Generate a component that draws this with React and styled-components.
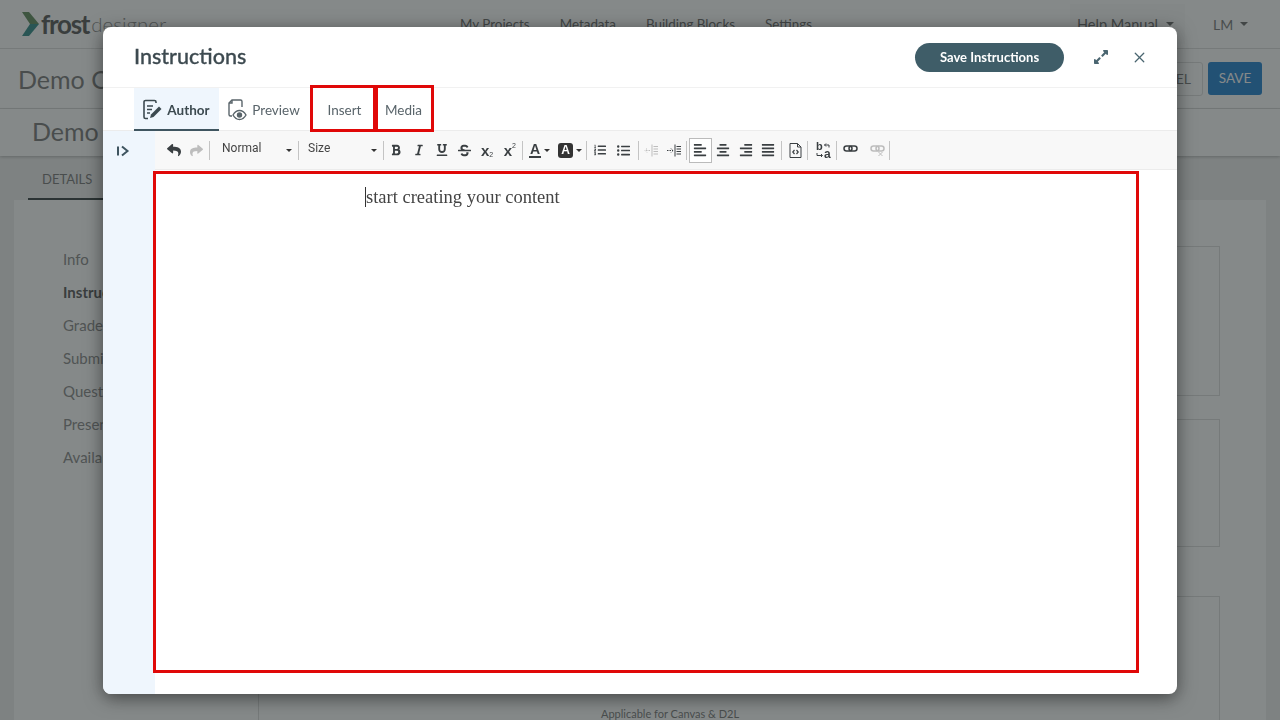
import React from "react";
import styled, { createGlobalStyle } from "styled-components";
import {
  FaReply,
  FaShare,
  FaBold,
  FaItalic,
  FaUnderline,
  FaStrikethrough,
  FaListOl,
  FaListUl,
  FaAlignLeft,
  FaAlignCenter,
  FaAlignRight,
  FaAlignJustify,
  FaExpandAlt,
} from "react-icons/fa";
import { X } from "lucide-react";

const Global = createGlobalStyle`
  html, body { margin: 0; padding: 0; height: 100%; overflow: hidden; }
  * { box-sizing: border-box; }
  body { font-family: Lato, "Open Sans", sans-serif; background: #efefef; color: #777; }
`;

/* page behind the dialog */
const Page = styled.div`
  width: 1280px;
  height: 720px;
  overflow: hidden;
`;
const TopBar = styled.header`
  height: 49px;
  background: #fff;
  border-bottom: 1px solid #dedede;
  display: flex;
  align-items: center;
  padding: 0 0 0 22px;
`;
const Logo = styled.div`
  width: 438px;
  display: flex;
  align-items: center;
  gap: 2px;
`;
const LogoFrost = styled.span`
  font-size: 26px;
  font-weight: 700;
  letter-spacing: -1.3px;
  color: #555;
`;
const LogoDesigner = styled.span`
  font-size: 20.5px;
  font-weight: 300;
  color: #888;
`;
const Nav = styled.nav`
  display: flex;
  gap: 30px;
  font-size: 13.4px;
  color: #666;
  width: 610px;
`;
const HelpMenu = styled.div`
  width: 115px;
  height: 40px;
  display: flex;
  align-items: center;
  gap: 8px;
  padding-left: 7px;
  font-size: 14.5px;
  color: #666;
  background: #fbfbfb;
`;
const UserMenu = styled.div`
  display: flex;
  align-items: center;
  gap: 7px;
  margin-left: 28px;
  font-size: 14px;
  color: #777;
`;
const NavCaret = styled.i`
  width: 0;
  height: 0;
  border: 4px solid transparent;
  border-top: 4px solid #666;
  border-bottom: 0;
`;
const TitleBar = styled.div`
  height: 60px;
  background: #fff;
  border-bottom: 1px solid #dedede;
  display: flex;
  align-items: center;
  justify-content: space-between;
  padding: 0 18px;
  font-size: 25px;
  color: #777;
`;
const TitleActions = styled.div`
  display: flex;
  gap: 5px;
`;
const GhostBtn = styled.div`
  width: 86px;
  height: 34px;
  border: 1px solid #ddd;
  border-radius: 3px;
  display: flex;
  align-items: center;
  justify-content: flex-end;
  padding-right: 11px;
  font-size: 14px;
  color: #777;
`;
const SaveBtn = styled.div`
  width: 54px;
  height: 33px;
  border-radius: 3px;
  background: #1f7fd0;
  display: flex;
  align-items: center;
  justify-content: center;
  font-size: 13.5px;
  color: #fff;
`;
const SubBar = styled.div`
  height: 47px;
  background: #fff;
  box-shadow: 0 1px 3px rgba(0, 0, 0, 0.25);
  padding: 7px 32px 0;
  font-size: 25px;
  color: #777;
`;
const PageTabs = styled.div`
  height: 44px;
  padding-left: 28px;
`;
const PageTab = styled.div`
  width: 100px;
  height: 44px;
  border-bottom: 2px solid #333d3e;
  padding: 15px 0 0 14px;
  font-size: 13px;
  color: #777;
`;
const Panel = styled.div`
  margin: 0 14px;
  height: 520px;
  background: #fff;
  display: flex;
`;
const Side = styled.ul`
  list-style: none;
  margin: 0;
  padding: 43px 0 0 49px;
  width: 244px;
`;
const SideItem = styled.li`
  height: 33px;
  line-height: 33px;
  font-size: 15px;
  color: ${(p) => (p.$on ? "#555" : "#888")};
  font-weight: ${(p) => (p.$on ? 700 : 400)};
`;
const Cards = styled.div`
  width: 962px;
  padding-top: 46px;
`;
const Card = styled.div`
  height: ${(p) => p.$h}px;
  margin-bottom: ${(p) => p.$mb}px;
  border: 1px solid #dcdcdc;
  padding: 110px 0 0 342px;
  font-size: 11px;
  color: #777;
`;

/* dim layer + dialog */
const Overlay = styled.div`
  position: fixed;
  inset: 0;
  background: rgba(38, 44, 44, 0.56);
  display: flex;
  align-items: center;
  justify-content: center;
  padding-top: 1px;
`;
const Dialog = styled.div`
  width: 1074px;
  height: 667px;
  background: #fff;
  border-radius: 8px;
  box-shadow: 0 4px 18px rgba(0, 0, 0, 0.5);
  display: flex;
  flex-direction: column;
  overflow: hidden;
`;
const DialogHead = styled.div`
  height: 61px;
  flex: none;
  display: flex;
  align-items: center;
  padding: 0 28px 0 31px;
  border-bottom: 1px solid #f1f1f1;
`;
const DialogTitle = styled.h1`
  margin: 0 0 2px;
  flex: 1;
  font-size: 21.5px;
  font-weight: 500;
  color: #3d4a50;
  -webkit-text-stroke: 0.3px #3d4a50;
`;
const SaveInstructions = styled.button`
  width: 149px;
  height: 29px;
  border: 0;
  border-radius: 15px;
  background: #3f5d68;
  color: #fff;
  font: 700 13px Lato, sans-serif;
`;
const HeadIcon = styled.span`
  display: flex;
  align-items: center;
  justify-content: center;
  width: 20px;
  color: #4a6570;
  margin-left: ${(p) => p.$ml}px;
`;
const TabRow = styled.div`
  height: 43px;
  flex: none;
  display: flex;
  padding-left: 31px;
  border-bottom: 1px solid #ececec;
`;
const Tab = styled.div`
  position: relative;
  width: ${(p) => p.$w}px;
  height: 43px;
  display: flex;
  align-items: center;
  justify-content: center;
  gap: 4px;
  padding: 0 ${(p) => p.$pr || 0}px 0 ${(p) => p.$pl || 0}px;
  font-size: 13.5px;
  font-weight: ${(p) => (p.$active ? 700 : 400)};
  color: ${(p) => (p.$active ? "#3c4a50" : "#59646a")};
  background: ${(p) => (p.$active ? "#eff6fd" : "transparent")};
  box-shadow: ${(p) => (p.$active ? "inset 0 -2px 0 #3f5560" : "none")};
  &::after {
    content: ${(p) => (p.$marked ? '""' : "none")};
    position: absolute;
    top: -3px;
    bottom: -1px;
    left: 0;
    right: ${(p) => p.$or || 0}px;
    border: 3px solid #e00808;
  }
`;
const Body = styled.div`
  flex: 1;
  display: flex;
  min-height: 0;
`;
const Rail = styled.div`
  width: 52px;
  flex: none;
  background: #eff6fd;
  padding: 11px 0 0 13px;
  color: #3f5560;
`;
const EditorCol = styled.div`
  flex: 1;
  display: flex;
  flex-direction: column;
  min-width: 0;
`;
const Toolbar = styled.div`
  height: 39px;
  flex: none;
  display: flex;
  align-items: center;
  padding-left: 8px;
  background: #f8f8f8;
  border-bottom: 1px solid #ececec;
`;
const Tool = styled.span`
  width: ${(p) => p.$w || 22.7}px;
  height: 25px;
  margin-left: ${(p) => p.$ml || 0}px;
  flex: none;
  display: flex;
  align-items: center;
  justify-content: center;
  gap: 3px;
  color: ${(p) => (p.$off ? "#bdbdbd" : "#3a3f42")};
  font-size: 13px;
  border: ${(p) => (p.$on ? "1px solid #bbb" : "0")};
  background: ${(p) => (p.$on ? "#fff" : "transparent")};
`;
const Sep = styled.i`
  width: 1px;
  height: 19px;
  flex: none;
  background: #c4c4c4;
  margin: 0 1px 0 ${(p) => p.$left ?? 1}px;
`;
const Combo = styled.span`
  width: ${(p) => p.$w}px;
  height: 25px;
  flex: none;
  display: flex;
  align-items: flex-start;
  justify-content: space-between;
  padding: 3px 5px 0 ${(p) => p.$pl}px;
  font: 12px Roboto, "Liberation Sans", sans-serif;
  color: #444;
`;
const ComboCaret = styled.i`
  width: 0;
  height: 0;
  margin-top: ${(p) => p.$mt ?? 8}px;
  border: 3px solid transparent;
  border-top: 3px solid #333;
  border-bottom: 0;
`;
const Sub = styled.span`
  font: 700 15px "Liberation Sans", sans-serif;
  display: flex;
  align-items: ${(p) => (p.$up ? "flex-start" : "flex-end")};
  small {
    font-size: 7px;
    font-weight: 400;
    line-height: 8px;
  }
`;
const ColorA = styled.span`
  font: 700 14px/13px "Liberation Sans", sans-serif;
  border-bottom: 2px solid #3a3f42;
  padding: 0 1px;
`;
const BackA = styled.span`
  width: 15px;
  height: 15px;
  border-radius: 3px;
  background: #333;
  color: #fff;
  font: 700 12px/15px "Liberation Sans", sans-serif;
  text-align: center;
`;
const Editor = styled.div`
  position: relative;
  flex: 1;
  padding: 17px 0 0 210px;
  font: 18.5px "Liberation Serif", serif;
  color: #444;
`;
const Typed = styled.span`
  border-left: 1px solid #333;
  display: inline-block;
  line-height: 20px;
`;
const RedBox = styled.div`
  position: absolute;
  top: 1px;
  left: -2px;
  right: 38px;
  bottom: 21px;
  border: 3px solid #e00808;
  pointer-events: none;
`;

const AuthorIcon = () => (
  <svg width="22" height="22" viewBox="0 0 22 22" fill="none" stroke="#3c4a50" strokeWidth="1.6">
    <path d="M15 4V3a1.5 1.5 0 0 0-1.5-1.5h-9A1.5 1.5 0 0 0 3 3v15a1.5 1.5 0 0 0 1.5 1.5H7" />
    <path d="M6 7h6M6 10.5h5M6 14h3" />
    <path d="M9 19l1-3.5 8-8 2.5 2.5-8 8z" fill="#3c4a50" stroke="none" />
  </svg>
);
const PreviewIcon = () => (
  <svg width="22" height="22" viewBox="0 0 22 22" fill="none" stroke="#59646a" strokeWidth="1.4">
    <path d="M6 17H4.500A1.500 1.500 0 0 1 3 15.500V4l3-3h8.500A1.500 1.500 0 0 1 16 2.500V8" />
    <path d="M6 1v3H3" />
    <path d="M7 16c1.700-3 3.700-4.500 6.500-4.500S18.300 13 20 16c-1.700 3-3.700 4.500-6.500 4.500S8.700 19 7 16z" />
    <circle cx="13.500" cy="16" r="2" fill="#59646a" />
  </svg>
);
const RailIcon = () => (
  <svg width="14" height="14" viewBox="0 0 14 14" fill="none" stroke="currentColor" strokeWidth="2">
    <path d="M2 2.500v9M6 2.500L11.500 7 6 11.500" />
  </svg>
);
const IndentIcon = ({ out }) => (
  <svg width="14" height="13" viewBox="0 0 14 13" fill="none" stroke="currentColor" strokeWidth="1">
    <path d="M8 .5v12M9.500 2.500H14M9.500 5H14M9.500 7.500H14M9.500 10H14" />
    {out ? (
      <path d="M6 6.500H1M3 4.500l-2 2 2 2" strokeDasharray="1.500 1" />
    ) : (
      <path d="M0 6.500h6M4 4.500l2 2-2 2" strokeDasharray="1.500 1" />
    )}
  </svg>
);
const SourceIcon = () => (
  <svg width="13" height="15" viewBox="0 0 13 15" fill="none" stroke="currentColor" strokeWidth="1">
    <path d="M1 .5h7.500L12 4v10.500H1zM8.500.5V4H12" />
    <path d="M5.500 7L3.800 9l1.700 2M7.500 7l1.700 2-1.700 2" strokeWidth="1.200" />
  </svg>
);
const SwapIcon = () => (
  <svg width="16" height="19" viewBox="0 -1 16 19" fill="none" stroke="currentColor" strokeWidth="1">
    <text x="0" y="8" fontSize="11" fontWeight="700" fontFamily="Liberation Sans" fill="currentColor" stroke="none">b</text>
    <text x="8" y="16" fontSize="12" fontWeight="700" fontFamily="Liberation Sans" fill="currentColor" stroke="none">a</text>
    <path d="M13 5.500V3H8.500M10 1.500L8.500 3 10 4.500M1 11v2.500h5M5 12l1.500 1.500L5 15" />
  </svg>
);
const LinkIcon = ({ off }) => (
  <svg width="15" height="14" viewBox="0 0 15 14" fill="none" stroke="currentColor" strokeWidth="1.500">
    <rect x="1" y="3" width="8" height="5" rx="2.500" />
    <rect x="6" y="3" width="8" height="5" rx="2.500" />
    {off && <path d="M8.500 9l4 4M12.500 9l-4 4" strokeWidth="1" />}
  </svg>
);
const LogoMark = () => (
  <svg width="17" height="24" viewBox="0 0 17 24">
    <path d="M0 0h7l10 12H8z" fill="#5f8a5a" />
    <path d="M8 12h9L7 24H0z" fill="#2f8a86" />
  </svg>
);

export default function App() {
  return (
    <Page>
      <Global />
      <TopBar>
        <Logo>
          <LogoMark />
          <LogoFrost>frost</LogoFrost>
          <LogoDesigner>designer</LogoDesigner>
        </Logo>
        <Nav>
          <span>My Projects</span>
          <span>Metadata</span>
          <span>Building Blocks</span>
          <span>Settings</span>
        </Nav>
        <HelpMenu>
          Help Manual <NavCaret />
        </HelpMenu>
        <UserMenu>
          LM <NavCaret />
        </UserMenu>
      </TopBar>
      <TitleBar>
        <span>Demo Course</span>
        <TitleActions>
          <GhostBtn>CANCEL</GhostBtn>
          <SaveBtn>SAVE</SaveBtn>
        </TitleActions>
      </TitleBar>
      <SubBar>Demo Assignment</SubBar>
      <PageTabs>
        <PageTab>DETAILS</PageTab>
      </PageTabs>
      <Panel>
        <Side>
          <SideItem>Info</SideItem>
          <SideItem $on>Instructions</SideItem>
          <SideItem>Grade</SideItem>
          <SideItem>Submission</SideItem>
          <SideItem>Questions</SideItem>
          <SideItem>Presentation</SideItem>
          <SideItem>Availability</SideItem>
        </Side>
        <Cards>
          <Card $h={150} $mb={23} />
          <Card $h={128} $mb={49} />
          <Card $h={200} $mb={0}>
            Applicable for Canvas &amp; D2L
          </Card>
        </Cards>
      </Panel>

      <Overlay>
        <Dialog>
          <DialogHead>
            <DialogTitle>Instructions</DialogTitle>
            <SaveInstructions>Save Instructions</SaveInstructions>
            <HeadIcon $ml={27}>
              <FaExpandAlt size={16} />
            </HeadIcon>
            <HeadIcon $ml={18}>
              <X size={17} strokeWidth={1.8} />
            </HeadIcon>
          </DialogHead>
          <TabRow>
            <Tab $w={85} $pr={2} $active>
              <AuthorIcon />
              Author
            </Tab>
            <Tab $w={91} $pr={3}>
              <PreviewIcon />
              Preview
            </Tab>
            <Tab $w={65} $marked $pl={4} $or={-1}>
              Insert
            </Tab>
            <Tab $w={57} $marked $or={-2}>
              Media
            </Tab>
          </TabRow>
          <Body>
            <Rail>
              <RailIcon />
            </Rail>
            <EditorCol>
              <Toolbar>
                <Tool $w={22.5}><FaReply size={14} /></Tool>
                <Tool $w={22.5} $off><FaShare size={13} /></Tool>
                <Sep />
                <Combo $w={86} $pl={11}>Normal<ComboCaret /></Combo>
                <Sep />
                <Combo $w={82} $pl={8}>Size<ComboCaret /></Combo>
                <Sep />
                <Tool><FaBold size={12} /></Tool>
                <Tool><FaItalic size={12} /></Tool>
                <Tool><FaUnderline size={12} /></Tool>
                <Tool><FaStrikethrough size={13} /></Tool>
                <Tool><Sub>x<small>2</small></Sub></Tool>
                <Tool><Sub $up>x<small>2</small></Sub></Tool>
                <Sep />
                <Tool $w={31}><ColorA>A</ColorA><ComboCaret $mt={0} /></Tool>
                <Tool $w={30}><BackA>A</BackA><ComboCaret $mt={0} /></Tool>
                <Sep />
                <Tool $ml={1}><FaListOl size={12} /></Tool>
                <Tool><FaListUl size={13} /></Tool>
                <Sep $left={3} />
                <Tool $off><IndentIcon out /></Tool>
                <Tool><IndentIcon /></Tool>
                <Sep />
                <Tool $on $ml={1}><FaAlignLeft size={14} /></Tool>
                <Tool><FaAlignCenter size={14} /></Tool>
                <Tool><FaAlignRight size={14} /></Tool>
                <Tool><FaAlignJustify size={14} /></Tool>
                <Sep />
                <Tool $ml={2}><SourceIcon /></Tool>
                <Sep $left={0} />
                <Tool $ml={3}><SwapIcon /></Tool>
                <Sep $left={1} />
                <Tool $ml={1}><LinkIcon /></Tool>
                <Tool $off $ml={4}><LinkIcon off /></Tool>
                <Sep />
              </Toolbar>
              <Editor>
                <Typed>start creating your content</Typed>
                <RedBox />
              </Editor>
            </EditorCol>
          </Body>
        </Dialog>
      </Overlay>
    </Page>
  );
}
